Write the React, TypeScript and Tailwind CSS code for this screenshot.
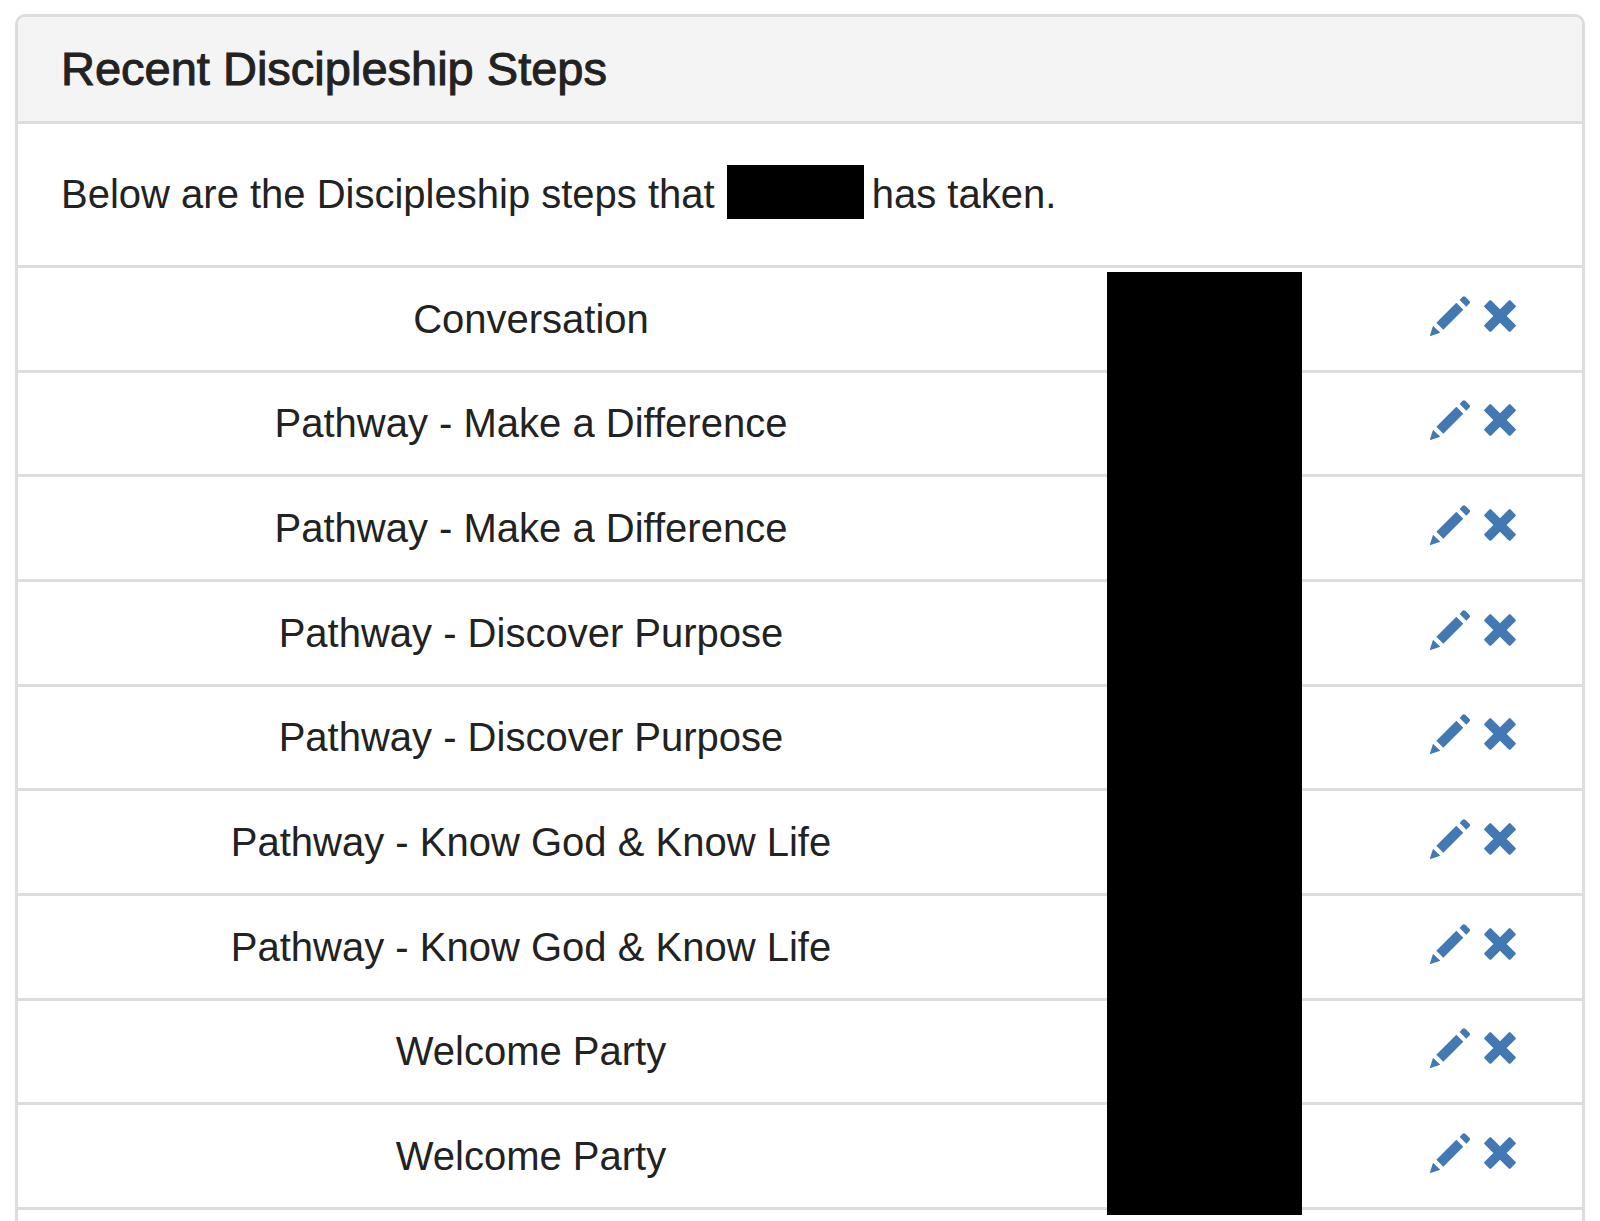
const STEPS = [
  "Conversation",
  "Pathway - Make a Difference",
  "Pathway - Make a Difference",
  "Pathway - Discover Purpose",
  "Pathway - Discover Purpose",
  "Pathway - Know God & Know Life",
  "Pathway - Know God & Know Life",
  "Welcome Party",
  "Welcome Party",
];

function PencilIcon() {
  return (
    <svg className="w-10 h-10" viewBox="0 0 120 120" fill="currentColor" aria-hidden="true">
      <path d="M89 12 L97 3 Q101 -1 106 2 L118 14 Q122 19 119 22 L109 32 Z" />
      <path d="M79 20 L100 41 L40 101 L19 80 Z" />
      <path d="M9 89 L31 110 L-1 121 Z" />
    </svg>
  );
}

function RemoveIcon() {
  return (
    <svg className="w-8 h-8" viewBox="0 0 96 96" fill="currentColor" aria-hidden="true">
      <path d="M17 1 Q19 0 21 1 L48 28 L75 1 Q77 0 79 1 L95 17 Q96 19 95 21 L68 48 L95 75 Q96 77 95 79 L79 95 Q77 96 75 95 L48 68 L21 95 Q19 96 17 95 L1 79 Q0 77 1 75 L28 48 L1 21 Q0 19 1 17 Z" />
    </svg>
  );
}

export default function App() {
  return (
    <main className="min-h-screen flex flex-col bg-white px-[15px] pt-[14px] text-[#222] font-['Liberation_Sans',Arial,sans-serif]">
      <section className="flex-1 border-3 border-b-0 border-[#ddd] rounded-t-[10px]">
        <header className="bg-[#f4f4f4] rounded-t-[7px] px-[43px] py-6 border-b-3 border-[#ddd]">
          <h2 className="text-[47px] leading-[56px] font-medium [-webkit-text-stroke:1px_#222]">
            Recent Discipleship Steps
          </h2>
        </header>

        <p className="flex items-start px-[43px] pt-[41px] pb-[42px] text-[40px] leading-[58px]">
          <span>Below are the Discipleship steps that</span>
          <span className="w-[137px] h-[54px] bg-black ml-3 mr-2" />
          <span>has taken.</span>
        </p>

        <div className="relative">
          <table className="w-full h-[945px] table-fixed border-collapse text-center text-[40px] leading-[56px]">
            <colgroup>
              <col className="w-[65.6%]" />
              <col className="w-[20.5%]" />
              <col className="w-[13.9%]" />
            </colgroup>
            <tbody>
              {STEPS.map((step, i) => (
                <tr key={i} className="border-y-3 border-[#ddd]">
                  <td>{step}</td>
                  <td />
                  <td>
                    <div className="flex items-center justify-center gap-[14px] pb-[6px] text-[#4279b2]">
                      <a href="#edit" aria-label={`Edit ${step}`}>
                        <PencilIcon />
                      </a>
                      <a href="#remove" aria-label={`Remove ${step}`}>
                        <RemoveIcon />
                      </a>
                    </div>
                  </td>
                </tr>
              ))}
            </tbody>
          </table>
          {/* covers the date column */}
          <div className="absolute top-[7px] -bottom-[5px] left-[69.6%] w-[12.5%] bg-black" />
        </div>
      </section>
    </main>
  );
}
